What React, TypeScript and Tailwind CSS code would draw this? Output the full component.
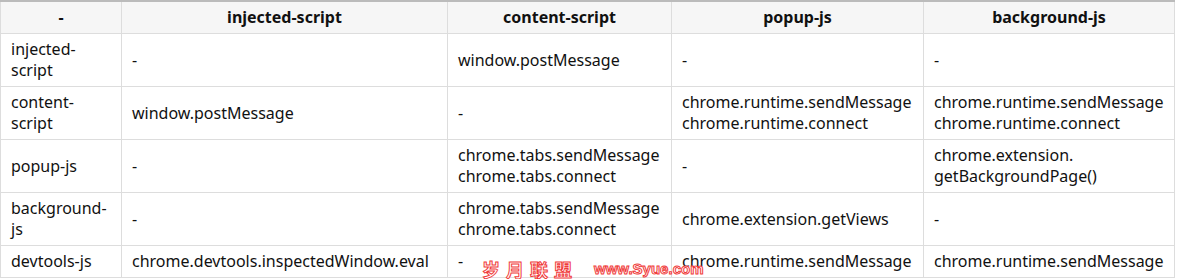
const headers = ["-", "injected-script", "content-script", "popup-js", "background-js"];

const rows: string[][][] = [
  [["injected-", "script"], ["-"], ["window.postMessage"], ["-"], ["-"]],
  [
    ["content-", "script"],
    ["window.postMessage"],
    ["-"],
    ["chrome.runtime.sendMessage", "chrome.runtime.connect"],
    ["chrome.runtime.sendMessage", "chrome.runtime.connect"],
  ],
  [
    ["popup-js"],
    ["-"],
    ["chrome.tabs.sendMessage", "chrome.tabs.connect"],
    ["-"],
    ["chrome.extension.", "getBackgroundPage()"],
  ],
  [
    ["background-", "js"],
    ["-"],
    ["chrome.tabs.sendMessage", "chrome.tabs.connect"],
    ["chrome.extension.getViews"],
    ["-"],
  ],
  [
    ["devtools-js"],
    ["chrome.devtools.inspectedWindow.eval"],
    ["-"],
    ["chrome.runtime.sendMessage"],
    ["chrome.runtime.sendMessage"],
  ],
];

const widths = ["w-[121px]", "w-[326px]", "w-[224px]", "w-[252px]", "w-[251px]"];

export default function App() {
  return (
    <div className="relative w-[1177px] h-[279px] bg-white font-['Noto_Sans',sans-serif] text-[16px] leading-[21px] text-[#111]">
      <table className="table-fixed border-collapse w-[1174px] border-t-2 border-t-[#bbbbbb]">
        <thead>
          <tr className="bg-[#f6f6f6]">
            {headers.map((h, i) => (
              <th
                key={i}
                className={`${widths[i]} border border-[#dddddd] border-t-0 px-[10px] py-[5px] font-bold text-center`}
              >
                {h}
              </th>
            ))}
          </tr>
        </thead>
        <tbody>
          {rows.map((row, r) => (
            <tr key={r}>
              {row.map((cell, c) => (
                <td key={c} className="border border-[#dddddd] px-[10px] py-[5px] align-middle">
                  {cell.map((line, l) => (
                    <div key={l} className="whitespace-nowrap">
                      {line}
                    </div>
                  ))}
                </td>
              ))}
            </tr>
          ))}
        </tbody>
      </table>

      {/* watermark */}
      <div className="absolute left-[482px] top-[259px] flex items-center gap-[16px] text-white font-bold leading-[20px] [-webkit-text-stroke:1px_#f03a3a]">
        <span className="text-[18px] tracking-[6px] font-['Noto_Sans_CJK_SC',sans-serif]">岁月联盟</span>
        <span className="text-[15px] font-['Liberation_Sans',sans-serif]">www.Syue.com</span>
      </div>
    </div>
  );
}
